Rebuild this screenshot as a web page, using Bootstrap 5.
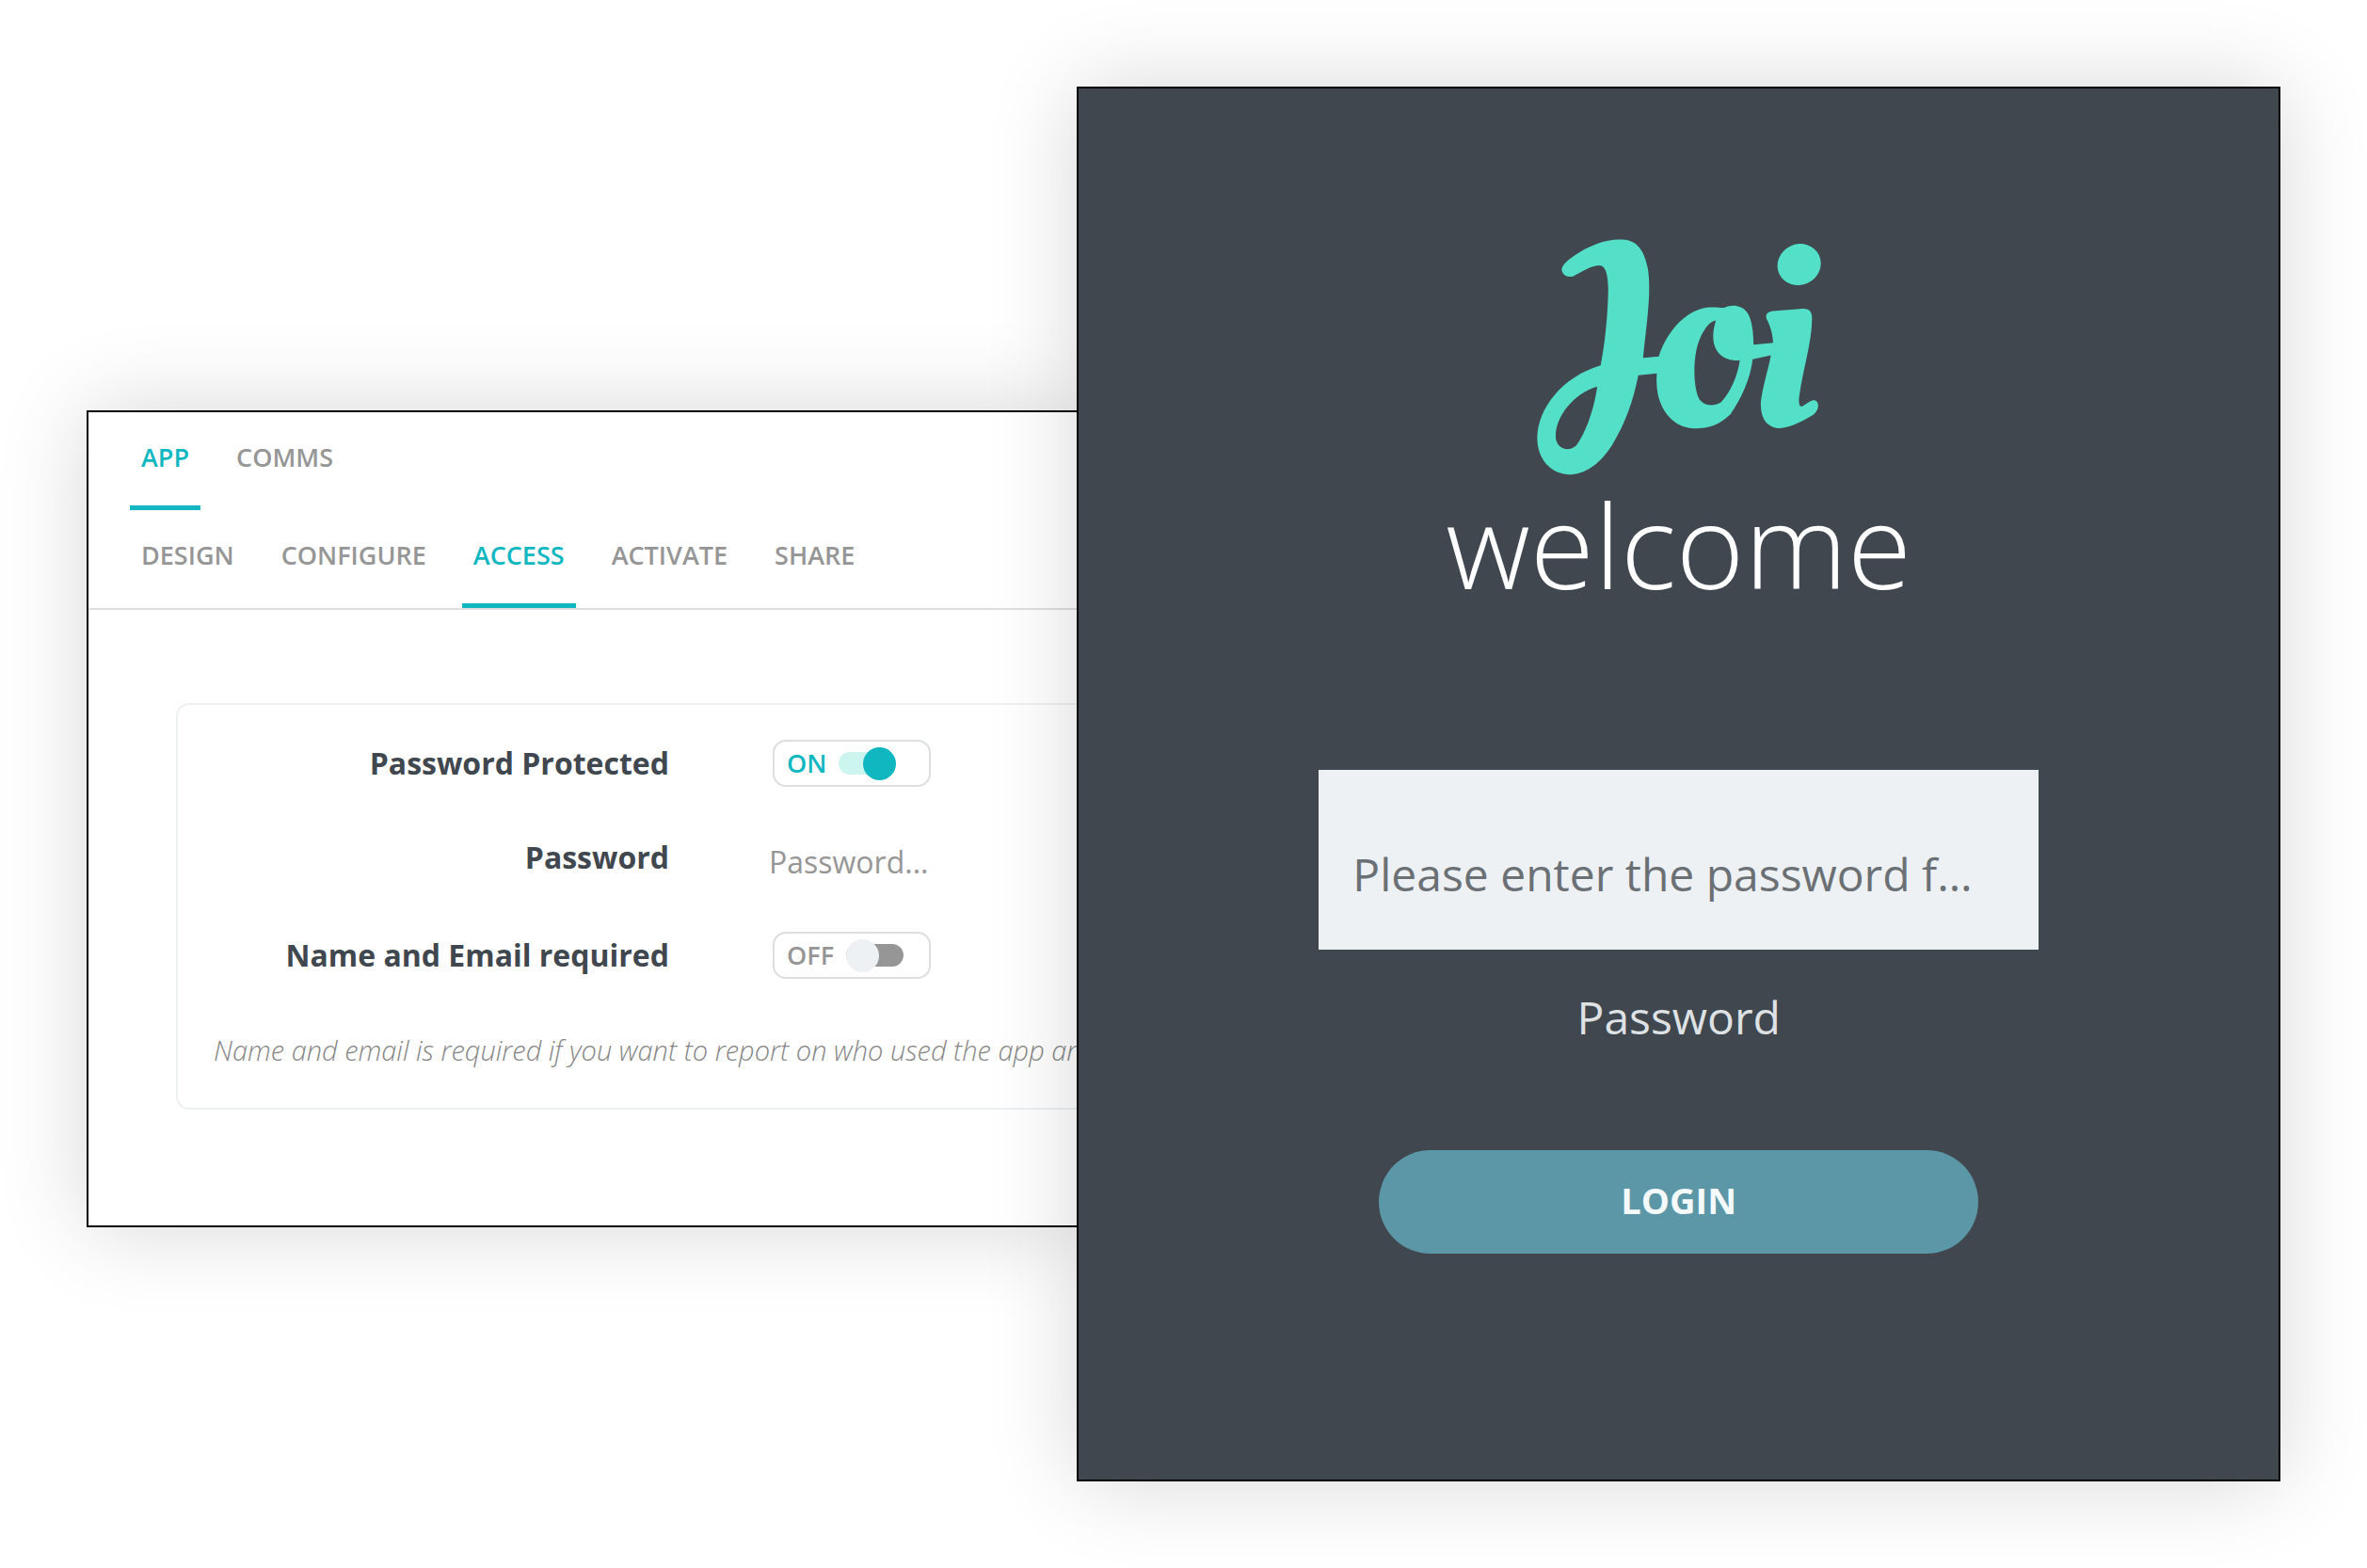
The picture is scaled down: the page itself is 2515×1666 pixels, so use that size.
<!DOCTYPE html>
<html lang="en">
<head>
<meta charset="utf-8">
<meta name="viewport" content="width=device-width, initial-scale=1">
<title>Joi – Access settings</title>
<link href="https://cdn.jsdelivr.net/npm/bootstrap@5.3.0/dist/css/bootstrap.min.css" rel="stylesheet">
<style>
  :root {
    --teal: #10b7c1;
    --mint: #54dfc9;
    --slate: #40474e;
    --muted: #969696;
    --pale: #edf1f4;
  }
  body { font-family: "Open Sans", "Noto Sans", sans-serif; color: var(--slate); background: #fff; }
  .stage { padding: 92px; }
  .pane { border: 2px solid #000; box-shadow: 0 0 90px rgba(0, 0, 0, .16); min-width: 0; }

  .settings-pane { flex: 1054 1 0; margin-top: 344px; padding-bottom: 123px; border-right: 0; background: #fff; }
  .tab-strip { gap: 26px; padding: 0 44px; }
  .tab-strip .nav-link {
    padding: 23px 12px 0; height: 104px; border-radius: 0; border-bottom: 5px solid transparent;
    font-size: 27px; line-height: 50px; font-weight: 600; color: var(--muted);
  }
  .tab-strip .nav-link.active { color: var(--teal); border-bottom-color: var(--teal); }
  .tab-strip.sub-tabs { border-bottom: 2px solid #dcdedf; }
  .clip { overflow: hidden; }
  .access-box {
    margin: 99px 0 0 93px; padding: 37px 0 39px 38px;
    border: 2px solid var(--pale); border-right: 0; border-radius: 14px 0 0 14px;
  }
  .setting { column-gap: 110px; height: 50px; }
  .setting-middle { margin: 50px 0 54px; }
  .setting-name { width: 484px; text-align: right; font-size: 32px; line-height: 48px; font-weight: 700; white-space: nowrap; }
  .toggle-box {
    width: 168px; height: 50px; gap: 13px; padding: 0 13px; border: 2px solid #dcdedf; border-radius: 14px;
    font-size: 27px; line-height: 46px; font-weight: 600; color: var(--muted);
  }
  .toggle-box.is-on { color: var(--teal); }
  .toggle-box input {
    appearance: none; display: flex; align-items: center; width: 61px; height: 24px; margin: 0;
    border-radius: 12px; background: var(--muted);
  }
  .toggle-box input::before { content: ""; width: 35px; height: 35px; border-radius: 50%; background: var(--pale); }
  .toggle-box input:checked { justify-content: flex-end; background: #cbf5ee; }
  .toggle-box input:checked::before { background: var(--teal); }
  .pass-field { width: 300px; margin-left: -4px; padding: 10px 0 0; border: 0; background: none; font-size: 32px; line-height: 48px; color: var(--slate); }
  .pass-field::placeholder { color: var(--muted); opacity: 1; }
  .hint { margin: 54px 0 0; font-size: 29px; line-height: 44px; font-style: italic; font-weight: 300; color: #868686; }

  .login-pane { flex: 1279 1 0; z-index: 1; padding: 160px 0 240px; background: var(--slate); }
  .joi-logo { width: 302px; height: 251px; }
  .greeting { font-size: 124px; line-height: 146px; font-weight: 300; color: #fff; }
  .guest-field {
    width: 60%; height: 191px; margin-top: 167px; padding: 30px 36px 0; border: 0; border-radius: 0; background: var(--pale);
    font-size: 48px; color: #6b7075;
  }
  .guest-field::placeholder { color: #6b7075; opacity: 1; }
  .guest-label { margin-top: 36px; font-size: 48px; line-height: 72px; color: #dfe2e5; }
  .login-btn, .login-btn:hover {
    width: 50%; height: 110px; margin-top: 105px; padding: 0 0 4px; border: 0; background: #5b97a7;
    font-size: 38px; font-weight: 700; color: #f4f9fb;
  }
</style>
</head>
<body>
<main class="stage d-flex align-items-start">
  <section class="pane settings-pane">
    <nav class="nav tab-strip flex-nowrap" aria-label="Sections">
      <a class="nav-link active" href="#app" aria-current="page">APP</a>
      <a class="nav-link" href="#comms">COMMS</a>
    </nav>
    <nav class="nav tab-strip sub-tabs flex-nowrap" aria-label="App settings">
      <a class="nav-link" href="#design">DESIGN</a>
      <a class="nav-link" href="#configure">CONFIGURE</a>
      <a class="nav-link active" href="#access" aria-current="page">ACCESS</a>
      <a class="nav-link" href="#activate">ACTIVATE</a>
      <a class="nav-link" href="#share">SHARE</a>
    </nav>
    <div class="clip">
      <form class="access-box d-flex flex-column">
        <div class="setting d-flex align-items-center">
          <label class="setting-name" for="protected">Password Protected</label>
          <label class="toggle-box is-on d-flex align-items-center">ON
            <input type="checkbox" role="switch" id="protected" checked>
          </label>
        </div>
        <div class="setting setting-middle d-flex align-items-center">
          <label class="setting-name" for="password">Password</label>
          <input class="pass-field" type="text" id="password" placeholder="Password...">
        </div>
        <div class="setting d-flex align-items-center">
          <label class="setting-name" for="identity">Name and Email required</label>
          <label class="toggle-box d-flex align-items-center">OFF
            <input type="checkbox" role="switch" id="identity">
          </label>
        </div>
        <p class="hint text-nowrap">Name and email is required if you want to report on who used the app and</p>
      </form>
    </div>
  </section>

  <section class="pane login-pane">
    <form class="d-flex flex-column align-items-center">
      <svg class="joi-logo" viewBox="99 72 905 752" role="img" aria-label="Joi" fill="#54dfc9">
        <path fill-rule="evenodd" d="M178 170C178 155 200 133 250 105C300 78 345 71 380 74C425 79 443 120 452 165C465 240 447 350 437 450L487 446C510 370 570 300 640 290C665 287 690 292 697 290C720 280 750 282 768 305C785 330 788 370 789 408L851 402C850 370 840 345 830 325C826 310 835 303 850 301L945 294C968 293 975 305 975 325C975 400 945 490 934 575C932 595 935 608 945 604C965 592 975 583 985 586C1000 592 998 620 975 634C930 662 890 676 865 674C825 668 810 635 812 590C818 540 835 490 844 442L786 455C778 520 750 580 715 630C680 665 640 676 600 675C540 672 500 630 485 570C480 545 479 520 481 500L422 506C405 590 380 660 340 725C300 790 250 822 200 822C140 818 100 770 100 705C102 610 180 510 302 474C318 400 326 290 326 230C325 185 318 158 300 156C270 156 240 178 215 190C195 196 180 185 178 170ZM291 542C282 610 255 690 225 728C205 748 170 746 160 712C150 650 210 565 291 542ZM669 331C655 375 655 420 690 446C708 458 728 460 745 458C738 510 715 560 685 592C660 606 630 604 615 580C597 540 598 470 606 430C615 385 640 335 669 331Z"/>
        <ellipse cx="934" cy="153" rx="70" ry="65" transform="rotate(-25 934 153)"/>
      </svg>
      <h1 class="greeting mb-0">welcome</h1>
      <input class="guest-field" type="text" id="guest-password" placeholder="Please enter the password f…">
      <label class="guest-label" for="guest-password">Password</label>
      <button class="btn login-btn rounded-pill" type="button">LOGIN</button>
    </form>
  </section>
</main>
<script src="https://cdn.jsdelivr.net/npm/bootstrap@5.3.0/dist/js/bootstrap.bundle.min.js"></script>
</body>
</html>
